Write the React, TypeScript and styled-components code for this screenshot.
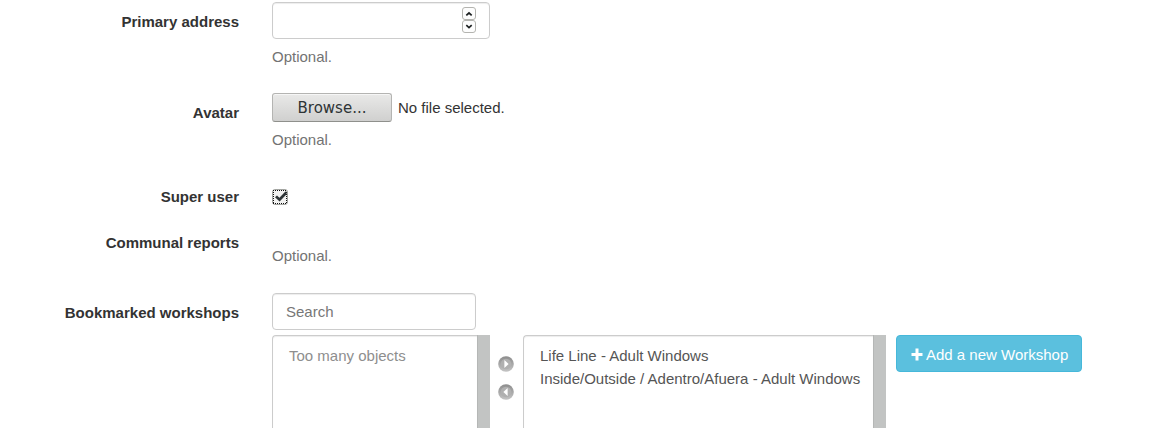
import React, { useRef, useState } from "react";
import styled, { createGlobalStyle } from "styled-components";

const GlobalStyle = createGlobalStyle`
  *, *::before, *::after { box-sizing: border-box; }
  body {
    margin: 0;
    background: #fff;
    color: #333;
    font: 15px/21px "Liberation Sans", Arial, sans-serif;
  }
  input, button, select { font: inherit; color: inherit; margin: 0; }
`;

const Form = styled.form`
  display: flex;
  flex-direction: column;
  height: 100vh;
  overflow: auto;
  padding-top: 2px;
`;

const Row = styled.div<{ $after?: number }>`
  display: grid;
  grid-template-columns: 239px minmax(0, 1fr);
  column-gap: 33px;
  align-items: start;
  flex: none;
  margin-bottom: ${(p) => p.$after ?? 27}px;
`;

const Name = styled.label`
  padding-top: 9px;
  font-weight: bold;
  text-align: right;
`;

const Help = styled.p<{ $gap?: number }>`
  margin: ${(p) => p.$gap ?? 7}px 0 0;
  color: #737373;
`;

const NumberBox = styled.div`
  display: flex;
  align-items: flex-start;
  width: 218px;
  height: 37px;
  padding: 4px 13px;
  border: 1px solid #ccc;
  border-radius: 4px;
  box-shadow: inset 0 1px 1px rgba(0, 0, 0, 0.075);
`;

const NumberInput = styled.input`
  flex: 1;
  min-width: 0;
  height: 27px;
  border: 0;
  padding: 0;
  background: none;
  outline: none;
  appearance: textfield;
  &::-webkit-inner-spin-button { appearance: none; }
`;

const Stepper = styled.div`
  display: flex;
  flex-direction: column;
`;

const StepButton = styled.button`
  display: grid;
  place-items: center;
  width: 14px;
  height: 13px;
  padding: 0;
  border: 1px solid #b4b4b0;
  border-radius: 3px;
  background: #fdfdfd;
`;

const FileLine = styled.div`
  display: flex;
  align-items: center;
  gap: 6px;
`;

const BrowseButton = styled.button`
  width: 120px;
  height: 29px;
  padding: 1px 0 0;
  border: 1px solid #b4b4b2;
  border-bottom-color: #8f908c;
  border-radius: 3px;
  background: linear-gradient(#e9e9e8, #d0d0cf);
  box-shadow: inset 0 1px 0 #f6f6f6;
  color: #2e3436;
  font-family: "DejaVu Sans", sans-serif;
`;

const CheckWrap = styled.span`
  display: grid;
  width: 16px;
  height: 16px;
  margin-top: 12px;
  > * { grid-area: 1 / 1; }
`;

const CheckBox = styled.input`
  appearance: none;
  width: 16px;
  height: 16px;
  border: 1px solid #a3a5a1;
  border-radius: 3px;
  background: #f2f2f1;
`;

const CheckMark = styled.svg`
  pointer-events: none;
`;

const SearchInput = styled.input`
  display: block;
  width: 204px;
  height: 37px;
  padding: 0 13px;
  border: 1px solid #ccc;
  border-radius: 4px;
  box-shadow: inset 0 1px 1px rgba(0, 0, 0, 0.075);
  outline: none;
  &::placeholder { color: #777; opacity: 1; }
`;

const Picker = styled.div`
  display: flex;
  align-items: flex-start;
  margin-top: 5px;
`;

const ListBox = styled.div<{ $width: number }>`
  display: flex;
  width: ${(p) => p.$width}px;
  height: 180px;
`;

const List = styled.select<{ $muted?: boolean }>`
  flex: 1;
  min-width: 0;
  padding: 10px 13px;
  border: 1px solid #ccc;
  border-right: 0;
  border-radius: 4px 0 0 4px;
  background: #fff;
  box-shadow: inset 0 1px 1px rgba(0, 0, 0, 0.075);
  outline: none;
  overflow: hidden;
  option {
    min-height: 23px;
    padding: 1px 3px;
    line-height: 21px;
    color: ${(p) => (p.$muted ? "#8e8e8e" : "#555")};
  }
`;

const Track = styled.div`
  width: 13px;
  border-left: 1px solid #b5b7b6;
  background: #c2c4c3;
`;

const Movers = styled.div`
  display: flex;
  flex-direction: column;
  gap: 12px;
  width: 33px;
  padding: 21px 0 0 8px;
`;

const MoveButton = styled.button`
  width: 16px;
  height: 16px;
  padding: 0;
  border: 0;
  background: none;
  svg { display: block; }
`;

const AddButton = styled.button`
  display: flex;
  align-items: center;
  gap: 3px;
  height: 37px;
  margin-left: 10px;
  padding: 1px 13px 0;
  border: 1px solid #46b8da;
  border-radius: 4px;
  background: #5bc0de;
  color: #fff;
  white-space: nowrap;
`;

function Arrow({ flip }: { flip?: boolean }) {
  const id = flip ? "disc-left" : "disc-right";
  return (
    <svg width="16" height="16" viewBox="0 0 16 16" aria-hidden="true">
      <defs>
        <linearGradient id={id} x1="0" y1="0" x2="0" y2="1">
          <stop offset="0" stopColor="#8c8c8c" />
          <stop offset="1" stopColor="#c4c4c4" />
        </linearGradient>
      </defs>
      <circle cx="8" cy="8" r="7.8" fill={`url(#${id})`} />
      <circle cx="8" cy="8" r="5.3" fill="#b0b0b0" />
      <path d={flip ? "M9.6 4v8L5.4 8z" : "M6.4 4v8l4.2-4z"} fill="#fff" />
    </svg>
  );
}

export default function App() {
  const file = useRef<HTMLInputElement>(null);
  const [fileName, setFileName] = useState("No file selected.");
  const [address, setAddress] = useState("");
  const [superUser, setSuperUser] = useState(true);
  const step = (by: number) => setAddress(String(Number(address) + by));

  return (
    <>
      <GlobalStyle />
      <Form onSubmit={(e) => e.preventDefault()}>
        <Row $after={26}>
          <Name htmlFor="address">Primary address</Name>
          <div>
            <NumberBox>
              <NumberInput id="address" type="number" value={address} onChange={(e) => setAddress(e.target.value)} />
              <Stepper>
                <StepButton type="button" aria-label="Increase" onClick={() => step(1)}>
                  <svg width="8" height="6" viewBox="0 0 8 6"><path d="M1.3 4.4 4 2l2.7 2.4" fill="none" stroke="#1b1f20" strokeWidth="1.7" /></svg>
                </StepButton>
                <StepButton type="button" aria-label="Decrease" onClick={() => step(-1)}>
                  <svg width="8" height="6" viewBox="0 0 8 6"><path d="M1.3 1.2 4 3.6l2.7-2.4" fill="none" stroke="#1b1f20" strokeWidth="1.7" /></svg>
                </StepButton>
              </Stepper>
            </NumberBox>
            <Help>Optional.</Help>
          </div>
        </Row>
        <Row>
          <Name htmlFor="avatar">Avatar</Name>
          <div>
            <FileLine>
              <BrowseButton type="button" onClick={() => file.current?.click()}>Browse...</BrowseButton>
              <span>{fileName}</span>
              <input
                id="avatar"
                ref={file}
                type="file"
                hidden
                onChange={(e) => setFileName(e.target.files?.[0]?.name ?? "No file selected.")}
              />
            </FileLine>
            <Help>Optional.</Help>
          </div>
        </Row>
        <Row $after={16}>
          <Name htmlFor="super">Super user</Name>
          <CheckWrap>
            <CheckBox id="super" type="checkbox" checked={superUser} onChange={(e) => setSuperUser(e.target.checked)} />
            <CheckMark width="16" height="16" viewBox="0 0 16 16">
              <path d="M1 1.5h14M1 14.5h14M1.5 3v11M14.5 3v11" fill="none" stroke="#111" strokeDasharray="1 1" />
              {superUser && <path d="M3 8.2 5 6.6l2.4 2.2 6-6.2 1.2.2v2.4L7.6 12.6z" fill="#2e3436" />}
            </CheckMark>
          </CheckWrap>
        </Row>
        <Row>
          <Name as="div">Communal reports</Name>
          <Help $gap={22}>Optional.</Help>
        </Row>
        <Row>
          <Name htmlFor="workshops">Bookmarked workshops</Name>
          <div>
            <SearchInput id="workshops" type="text" placeholder="Search" />
            <Picker>
              <ListBox $width={218}>
                <List multiple $muted aria-label="Available workshops">
                  <option disabled>Too many objects</option>
                </List>
                <Track />
              </ListBox>
              <Movers>
                <MoveButton type="button" aria-label="Add selected"><Arrow /></MoveButton>
                <MoveButton type="button" aria-label="Remove selected"><Arrow flip /></MoveButton>
              </Movers>
              <ListBox $width={363}>
                <List multiple aria-label="Bookmarked workshops">
                  <option>Life Line - Adult Windows</option>
                  <option>Inside/Outside / Adentro/Afuera - Adult Windows</option>
                </List>
                <Track />
              </ListBox>
              <AddButton type="button">
                <svg width="13" height="13" viewBox="0 0 13 13" aria-hidden="true">
                  <path d="M5.5.5h3V5h4v3h-4v4.500h-3V8h-4V5h4z" fill="#fff" />
                </svg>
                Add a new Workshop
              </AddButton>
            </Picker>
          </div>
        </Row>
      </Form>
    </>
  );
}
